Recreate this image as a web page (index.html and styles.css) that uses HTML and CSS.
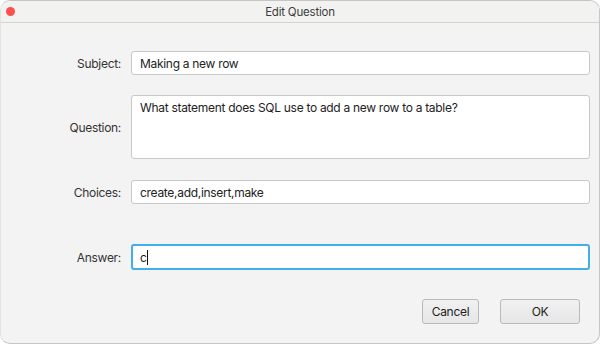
FILE: index.html
```html
<!DOCTYPE html>
<html lang="en">
  <head>
    <meta charset="utf-8" />
    <title>Edit Question</title>
    <link rel="stylesheet" href="styles.css">
  </head>
  <body>
    <div class="window">
      <div class="titlebar">
        <span class="close-dot"></span>
        <span class="title">Edit Question</span>
      </div>
      <div class="form">
        <div class="row row-subject">
          <label class="label">Subject:</label>
          <div class="field">Making a new row</div>
        </div>
        <div class="row row-question">
          <label class="label">Question:</label>
          <div class="field area">What statement does SQL use to add a new row to a table?</div>
        </div>
        <div class="row row-choices">
          <label class="label">Choices:</label>
          <div class="field">create,add,insert,make</div>
        </div>
        <div class="row row-answer">
          <label class="label">Answer:</label>
          <div class="field focused">c<span class="caret"></span></div>
        </div>
        <div class="buttons">
          <button class="btn btn-cancel">Cancel</button>
          <button class="btn btn-ok">OK</button>
        </div>
      </div>
    </div>
  </body>
</html>
```

FILE: styles.css
```css
html, body {
  margin: 0;
  background: #ffffff;
}

body {
  font-family: Inter, "Liberation Sans", sans-serif;
  font-size: 12px;
  letter-spacing: -0.3px;
  color: #2b2b2b;
}

.window {
  width: 600px;
  height: 344px;
  box-sizing: border-box;
  background: #f3f3f3;
  border: 1px solid #c6c6c6;
  border-left-color: #e2e2e2;
  border-radius: 10px;
  overflow: hidden;
}

.titlebar {
  position: relative;
  height: 21px;
  background: #f2f2f1;
  border-bottom: 1px solid #d2d2d2;
  display: flex;
  align-items: center;
  justify-content: center;
}

.close-dot {
  position: absolute;
  left: 5px;
  top: 6px;
  width: 9px;
  height: 9px;
  border-radius: 50%;
  background: #fd4f4c;
}

.title {
  font-size: 11.5px;
  letter-spacing: -0.2px;
  color: #3c3c3c;
}

.form {
  display: flex;
  flex-direction: column;
  padding: 28px 9px 0 0;
}

.row {
  display: flex;
  align-items: center;
}

.label {
  width: 120px;
  padding-right: 10px;
  text-align: right;
  color: #333333;
}

.field {
  flex: 1;
  height: 24px;
  box-sizing: border-box;
  background: #ffffff;
  border: 1px solid #c8c8c8;
  border-radius: 3px;
  padding: 0 8px;
  display: flex;
  align-items: center;
  color: #222222;
}

.area {
  height: 64px;
  align-items: flex-start;
  padding-top: 4px;
}

.focused {
  height: 26px;
  border: 2px solid #41aee9;
  padding-left: 7px;
}

.caret {
  display: inline-block;
  width: 1px;
  height: 15px;
  background: #111111;
}

.row-question {
  margin-top: 20px;
}

.row-choices {
  margin-top: 21px;
}

.row-answer {
  margin-top: 40px;
}

.buttons {
  display: flex;
  justify-content: flex-end;
  gap: 21px;
  margin-top: 29px;
  padding-right: 10px;
}

.btn {
  height: 25px;
  font-family: inherit;
  font-size: 12px;
  letter-spacing: -0.3px;
  color: #222222;
  background: linear-gradient(#f1f1f1, #e6e6e6);
  border: 1px solid #b9b9b9;
  border-radius: 3px;
}

.btn-cancel {
  width: 57px;
}

.btn-ok {
  width: 80px;
}
```
